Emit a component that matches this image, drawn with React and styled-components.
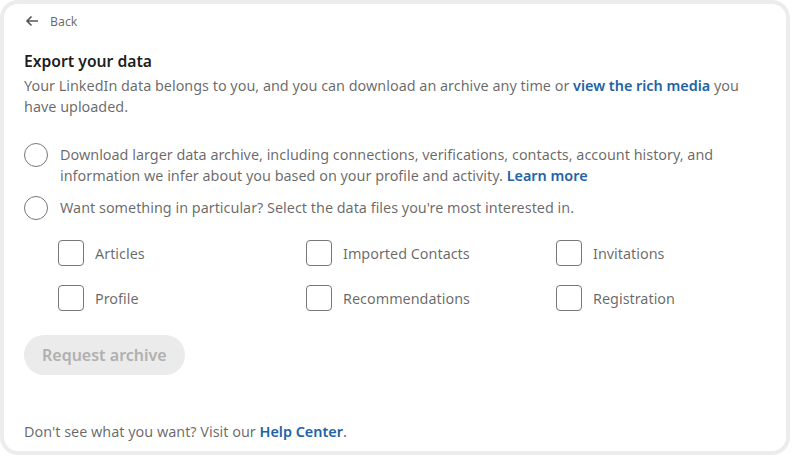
import React from "react";
import styled, { createGlobalStyle } from "styled-components";

const Global = createGlobalStyle`
  html, body { margin: 0; padding: 0; background: #ffffff; }
  body { font-family: "Noto Sans", "Open Sans", Arial, sans-serif; -webkit-font-smoothing: antialiased; }
  * { box-sizing: border-box; }
`;

const Card = styled.div`
  width: 790px;
  height: 455px;
  border: 4px solid #ececec;
  border-radius: 18px;
  background: #fff;
  padding: 7px 20px 0 20px;
  display: flex;
  flex-direction: column;
  color: rgba(0, 0, 0, 0.6);
  font-size: 14.4px;
`;

const BackLink = styled.button`
  display: flex;
  align-items: center;
  gap: 11px;
  border: 0;
  background: none;
  padding: 0 0 0 1px;
  height: 20px;
  font-family: inherit;
  font-size: 12.3px;
  color: rgba(0, 0, 0, 0.6);
  cursor: pointer;
  align-self: flex-start;
`;

const Heading = styled.h1`
  margin: 19px 0 0;
  font-size: 15.7px;
  font-weight: 600;
  line-height: 22px;
  color: rgba(0, 0, 0, 0.9);
`;

const Paragraph = styled.p`
  margin: 3px 0 0;
  line-height: 21px;
  color: rgba(0, 0, 0, 0.6);
`;

const Link = styled.a`
  color: #2163a4;
  font-weight: 600;
  text-decoration: none;
`;

const Options = styled.div`
  margin-top: 27px;
  display: flex;
  flex-direction: column;
  gap: 11px;
`;

const RadioRow = styled.label`
  display: flex;
  align-items: flex-start;
  gap: 12px;
  line-height: 21px;
`;

const RadioCircle = styled.span`
  flex: none;
  width: 24px;
  height: 24px;
  border-radius: 50%;
  border: 1px solid #777;
  margin-top: -1px;
`;

const Grid = styled.div`
  margin: 21px 0 0 34px;
  display: grid;
  grid-template-columns: 248px 250px 200px;
  row-gap: 21px;
`;

const CheckItem = styled.label`
  display: flex;
  align-items: center;
  gap: 11px;
  height: 24px;
`;

const CheckBox = styled.span`
  flex: none;
  width: 26px;
  height: 26px;
  border: 1px solid #777;
  border-radius: 4px;
`;

const Button = styled.button`
  margin-top: 25px;
  align-self: flex-start;
  height: 40px;
  padding: 0 18px;
  border: 0;
  border-radius: 20px;
  background: #ebebeb;
  color: #b0b0b0;
  font-family: inherit;
  font-size: 16px;
  font-weight: 600;
`;

const Footer = styled.p`
  margin: auto 0 9px;
  line-height: 21px;
`;

function ArrowLeft() {
  return (
    <svg width="14" height="12" viewBox="0 0 14 12" fill="none">
      <path d="M13 6H2M6.5 1.5L2 6l4.5 4.5" stroke="#555" strokeWidth="1.6" />
    </svg>
  );
}

const items = [
  "Articles",
  "Imported Contacts",
  "Invitations",
  "Profile",
  "Recommendations",
  "Registration",
];

export default function App() {
  return (
    <>
      <Global />
      <Card>
        <BackLink>
          <ArrowLeft />
          Back
        </BackLink>
        <Heading>Export your data</Heading>
        <Paragraph>
          Your LinkedIn data belongs to you, and you can download an archive any time or{" "}
          <Link href="#">view the rich media</Link> you have uploaded.
        </Paragraph>
        <Options>
          <RadioRow>
            <RadioCircle />
            <span>
              Download larger data archive, including connections, verifications, contacts, account history, and
              information we infer about you based on your profile and activity. <Link href="#">Learn more</Link>
            </span>
          </RadioRow>
          <RadioRow>
            <RadioCircle />
            <span>Want something in particular? Select the data files you're most interested in.</span>
          </RadioRow>
        </Options>
        <Grid>
          {items.map((it) => (
            <CheckItem key={it}>
              <CheckBox />
              {it}
            </CheckItem>
          ))}
        </Grid>
        <Button disabled>Request archive</Button>
        <Footer>
          Don't see what you want? Visit our <Link href="#">Help Center</Link>.
        </Footer>
      </Card>
    </>
  );
}
